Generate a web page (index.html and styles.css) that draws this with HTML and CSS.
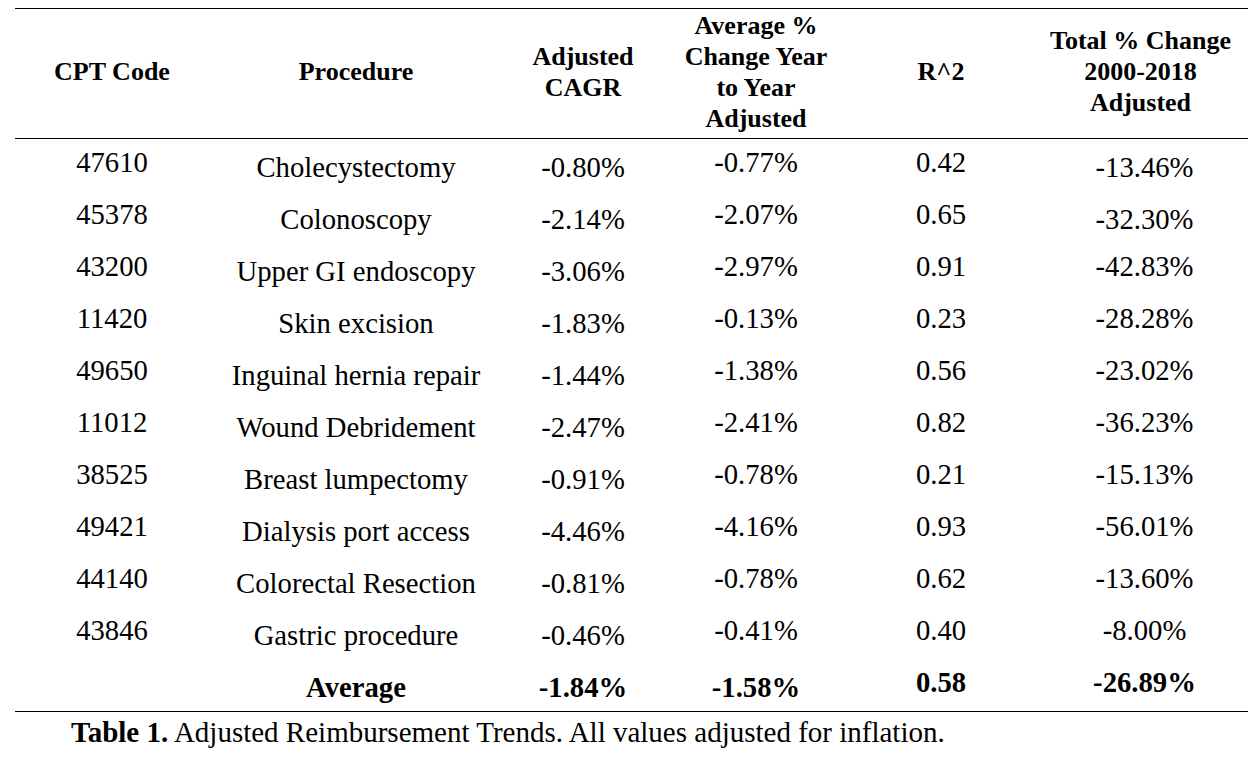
FILE: index.html
```html
<!DOCTYPE html>
<html>
<head>
<meta charset="utf-8">
<link rel="stylesheet" href="styles.css">
</head>
<body>
<div class="page">
  <table class="trends">
    <colgroup>
      <col class="c1"><col class="c2"><col class="c3"><col class="c4"><col class="c5"><col class="c6">
    </colgroup>
    <thead>
      <tr>
        <th>CPT Code</th>
        <th>Procedure</th>
        <th>Adjusted<br>CAGR</th>
        <th>Average %<br>Change Year<br>to Year<br>Adjusted</th>
        <th>R^2</th>
        <th>Total % Change<br>2000-2018<br>Adjusted</th>
      </tr>
    </thead>
    <tbody>
      <tr><td class="hi">47610</td><td class="lo">Cholecystectomy</td><td class="lo">-0.80%</td><td class="hi">-0.77%</td><td class="hi">0.42</td><td class="lo tot">-13.46%</td></tr>
      <tr><td class="hi">45378</td><td class="lo">Colonoscopy</td><td class="lo">-2.14%</td><td class="hi">-2.07%</td><td class="hi">0.65</td><td class="lo tot">-32.30%</td></tr>
      <tr><td class="hi">43200</td><td class="lo">Upper GI endoscopy</td><td class="lo">-3.06%</td><td class="hi">-2.97%</td><td class="hi">0.91</td><td class="hi tot">-42.83%</td></tr>
      <tr><td class="hi">11420</td><td class="lo">Skin excision</td><td class="lo">-1.83%</td><td class="hi">-0.13%</td><td class="hi">0.23</td><td class="hi tot">-28.28%</td></tr>
      <tr><td class="hi">49650</td><td class="lo">Inguinal hernia repair</td><td class="lo">-1.44%</td><td class="hi">-1.38%</td><td class="hi">0.56</td><td class="hi tot">-23.02%</td></tr>
      <tr><td class="hi">11012</td><td class="lo">Wound Debridement</td><td class="lo">-2.47%</td><td class="hi">-2.41%</td><td class="hi">0.82</td><td class="hi tot">-36.23%</td></tr>
      <tr><td class="hi">38525</td><td class="lo">Breast lumpectomy</td><td class="lo">-0.91%</td><td class="hi">-0.78%</td><td class="hi">0.21</td><td class="hi tot">-15.13%</td></tr>
      <tr><td class="hi">49421</td><td class="lo">Dialysis port access</td><td class="lo">-4.46%</td><td class="hi">-4.16%</td><td class="hi">0.93</td><td class="hi tot">-56.01%</td></tr>
      <tr><td class="hi">44140</td><td class="lo">Colorectal Resection</td><td class="lo">-0.81%</td><td class="hi">-0.78%</td><td class="hi">0.62</td><td class="hi tot">-13.60%</td></tr>
      <tr><td class="hi">43846</td><td class="lo">Gastric procedure</td><td class="lo">-0.46%</td><td class="hi">-0.41%</td><td class="hi">0.40</td><td class="hi tot">-8.00%</td></tr>
      <tr class="avg"><td class="hi"></td><td class="lo">Average</td><td class="lo">-1.84%</td><td class="lo">-1.58%</td><td class="hi">0.58</td><td class="hi tot">-26.89%</td></tr>
    </tbody>
  </table>
  <p class="caption"><b>Table 1.</b> Adjusted Reimbursement Trends. All values adjusted for inflation.</p>
</div>
</body>
</html>
```

FILE: styles.css
```css
html, body {
  margin: 0;
  padding: 0;
  background: #ffffff;
}

.page {
  padding: 8px 10px 0 15px;
  font-family: "Liberation Serif", "Times New Roman", serif;
  color: #000;
}

.trends {
  border-collapse: collapse;
  table-layout: fixed;
  width: 1233px;
  border-top: 1.5px solid #000;
  border-bottom: 1.5px solid #000;
  font-family: "Liberation Serif", "Times New Roman", serif;
}

.c1 { width: 194px; }
.c2 { width: 294px; }
.c3 { width: 160px; }
.c4 { width: 186px; }
.c5 { width: 184px; }
.c6 { width: 215px; }

.trends th {
  height: 130px;
  box-sizing: border-box;
  padding: 0 0 4px 0;
  font-family: "Liberation Serif", "Times New Roman", serif;
  font-size: 26px;
  line-height: 31px;
  font-weight: bold;
  text-align: center;
  vertical-align: middle;
  border-bottom: 1.5px solid #000;
}

.trends td {
  font-family: "Liberation Serif", "Times New Roman", serif;
  font-size: 28.7px;
  line-height: 32px;
  text-align: center;
  vertical-align: top;
  white-space: nowrap;
}

.trends td.lo {
  padding: 12px 0 8px 0;
}

.trends td.hi {
  padding: 7px 0 13px 0;
}

.trends td.tot {
  padding-left: 8px;
}

.avg td {
  font-weight: bold;
}

.caption {
  margin: 0;
  padding: 3px 0 0 56px;
  font-family: "Liberation Serif", "Times New Roman", serif;
  font-size: 29px;
  line-height: 34px;
}
```
